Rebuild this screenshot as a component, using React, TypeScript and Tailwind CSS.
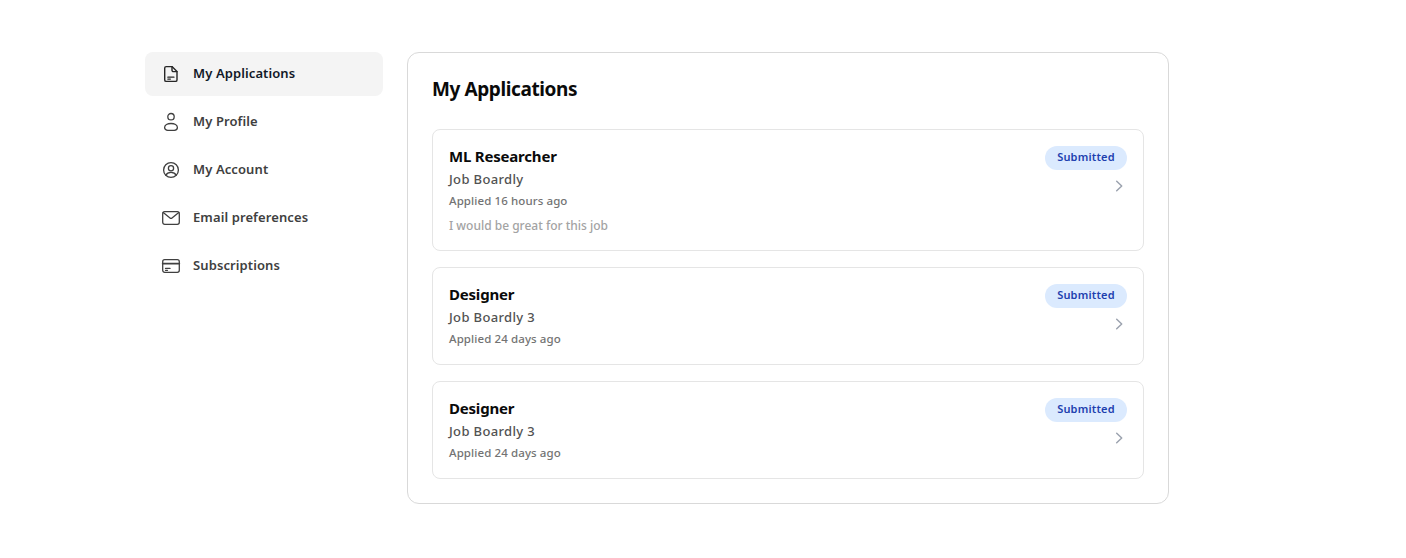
import React from "react";

const stroke = { fill: "none", stroke: "currentColor", strokeWidth: 1.5, strokeLinecap: "round" as const, strokeLinejoin: "round" as const };

const Doc = () => (
  <svg width="22" height="22" viewBox="0 0 22 22" {...stroke} strokeWidth="1.4">
    <path d="M6.2 3.6h5.8l5 5v8.3a1.5 1.5 0 0 1-1.5 1.5H6.2a1.5 1.5 0 0 1-1.5-1.5V5.1a1.5 1.5 0 0 1 1.5-1.5Z" />
    <path d="M12 3.6v3.6a1.4 1.4 0 0 0 1.4 1.4H17" />
    <path d="M7.8 14.2h6.2M7.8 16.1h2.6" strokeWidth="1.2" />
  </svg>
);
const User = () => (
  <svg width="22" height="22" viewBox="0 0 22 22" {...stroke} strokeWidth="1.3">
    <circle cx="11" cy="5.7" r="3.2" />
    <path d="M4.6 16.6c0-2.5 2.9-4.1 6.4-4.1s6.4 1.6 6.4 4.1c0 1.7-1.4 2.7-3.1 2.7H7.7c-1.7 0-3.1-1-3.1-2.7Z" />
  </svg>
);
const Account = () => (
  <svg width="22" height="22" viewBox="0 0 22 22" {...stroke} strokeWidth="1.3">
    <circle cx="11" cy="11" r="7.4" />
    <circle cx="11" cy="9.2" r="2.6" />
    <path d="M5.9 16.3c.8-1.8 2.8-2.9 5.1-2.9s4.3 1.1 5.1 2.9" />
  </svg>
);
const Mail = () => (
  <svg width="22" height="22" viewBox="0 0 22 22" {...stroke} strokeWidth="1.3">
    <rect x="2.7" y="4.7" width="16.6" height="12.6" rx="2" />
    <path d="M3.2 5.6l6.8 5.3a1.6 1.6 0 0 0 2 0l6.8-5.3" />
  </svg>
);
const Card = () => (
  <svg width="22" height="22" viewBox="0 0 22 22" {...stroke} strokeWidth="1.3">
    <rect x="2.7" y="4.7" width="16.6" height="12.6" rx="2" />
    <path d="M2.7 8.6h16.6" strokeWidth="1.8" />
    <path d="M5.5 13.4h4.5M5.5 15.3h2" />
  </svg>
);
const Chevron = () => (
  <svg width="20" height="20" viewBox="0 0 20 20" fill="none" stroke="#9ca3af" strokeWidth="1.5" strokeLinecap="round" strokeLinejoin="round">
    <path d="M7.7 5.2l5 4.8-5 4.8" />
  </svg>
);

const nav = [
  { label: "My Applications", Icon: Doc, active: true },
  { label: "My Profile", Icon: User },
  { label: "My Account", Icon: Account },
  { label: "Email preferences", Icon: Mail },
  { label: "Subscriptions", Icon: Card },
];

const apps = [
  { title: "ML Researcher", company: "Job Boardly", when: "Applied 16 hours ago", note: "I would be great for this job" },
  { title: "Designer", company: "Job Boardly 3", when: "Applied 24 days ago" },
  { title: "Designer", company: "Job Boardly 3", when: "Applied 24 days ago" },
];

export default function App() {
  return (
    <div className="min-h-[558px] bg-white font-['Noto_Sans',sans-serif]">
      <div className="flex items-start gap-6 pl-[145px] pt-[52px]">
        <nav className="flex w-[238px] flex-col gap-1">
          {nav.map(({ label, Icon, active }) => (
            <div
              key={label}
              className={`flex h-11 items-center gap-[11px] rounded-lg pl-[15px] text-[13px] font-semibold tracking-[0.1px] ${active ? "bg-[#f4f4f4] text-[#111827]" : "text-[#404040]"}`}
            >
              <span className={active ? "text-[#262626]" : "text-[#404040]"}>
                <Icon />
              </span>
              {label}
            </div>
          ))}
        </nav>
        <main className="w-[762px] rounded-xl border border-[#d9d9d9] p-6">
          <h1 className="text-[19px] font-bold leading-[24px] tracking-[-0.4px] text-[#0a0a0a]">My Applications</h1>
          <div className="mt-[28px] flex flex-col gap-4">
            {apps.map((a, i) => (
              <div key={i} className="flex justify-between rounded-lg border border-[#e5e5e5] px-4 py-[14px]">
                <div>
                  <div className="text-[15px] font-bold leading-[25px] tracking-[-0.2px] text-[#0a0a0a]">{a.title}</div>
                  <div className="text-[13px] font-medium leading-5 tracking-[0.35px] text-[#525252]">{a.company}</div>
                  <div className="mb-[1px] mt-[2px] text-[11.5px] font-medium leading-[20px] tracking-[0.1px] text-[#737373]">{a.when}</div>
                  {a.note && <div className="mt-[5px] text-[12px] font-medium leading-[20px] text-[#a3a3a3]">{a.note}</div>}
                </div>
                <div className="flex flex-col items-end">
                  <span className="mt-[2px] flex h-6 w-[82px] items-center justify-center rounded-full bg-[#dbeafe] pb-[2px] text-[11px] font-semibold tracking-[0.2px] text-[#1e40af]">Submitted</span>
                  <span className="mr-[-2px] mt-[6px]"><Chevron /></span>
                </div>
              </div>
            ))}
          </div>
        </main>
      </div>
    </div>
  );
}
